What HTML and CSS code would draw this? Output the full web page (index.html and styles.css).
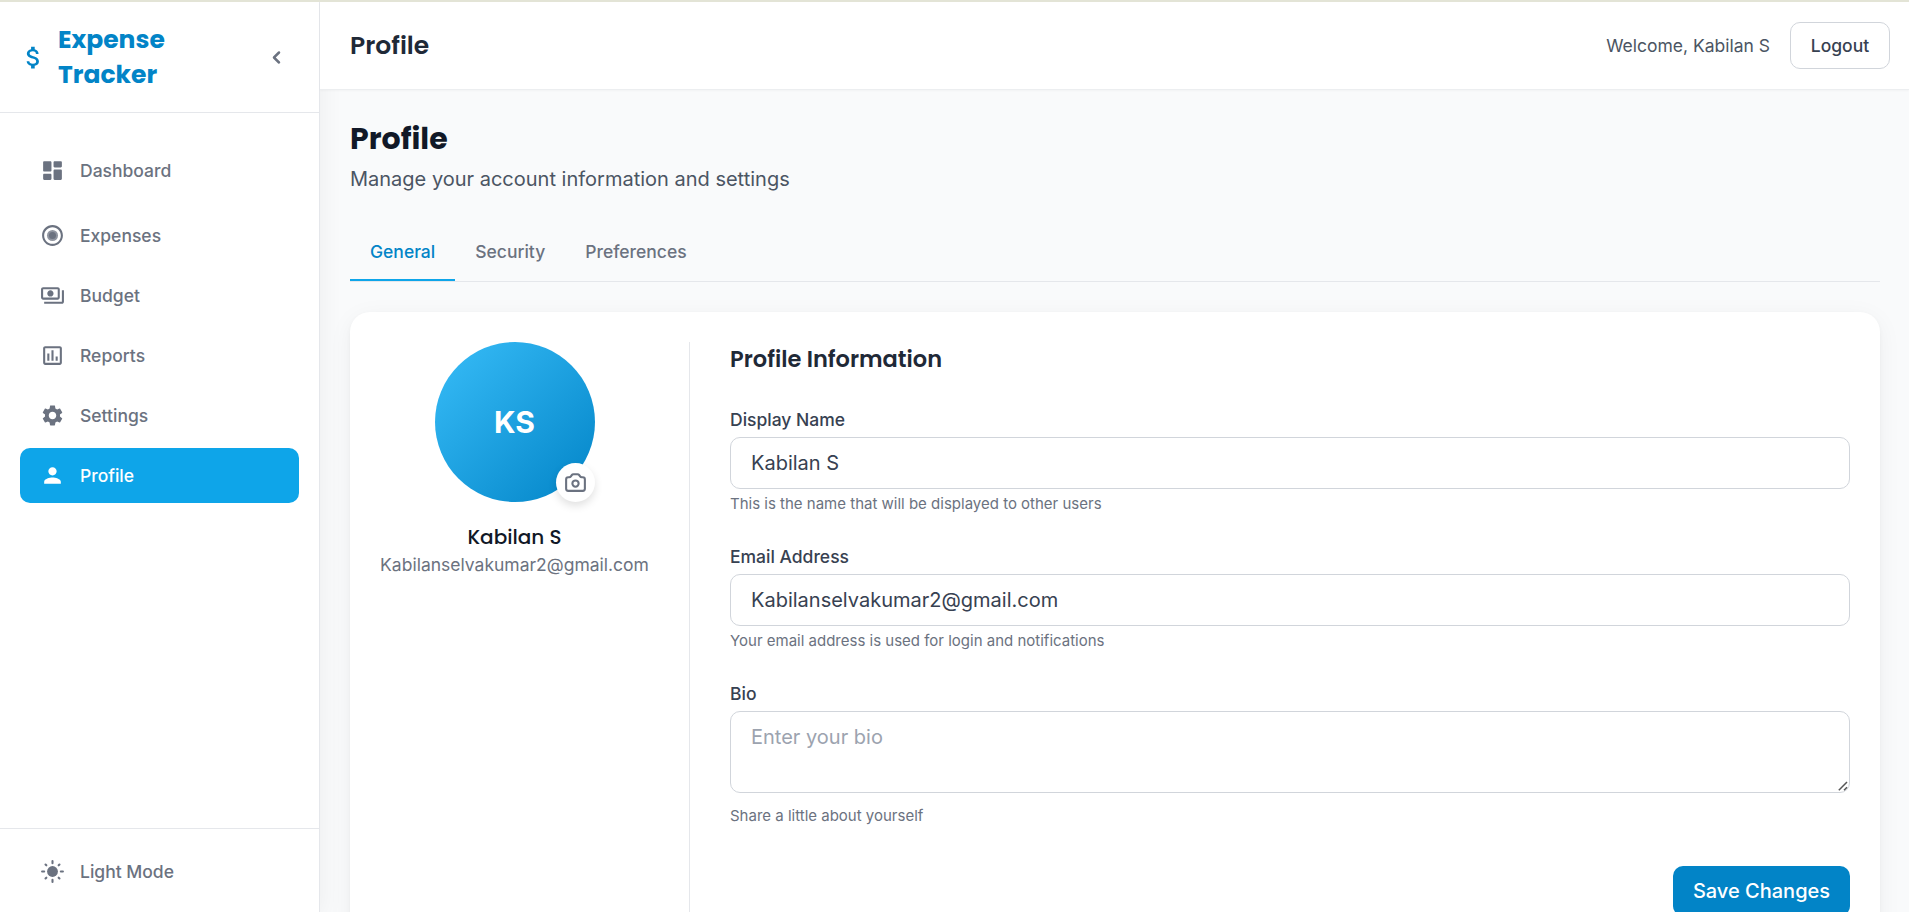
FILE: index.html
```html
<!DOCTYPE html>
<html lang="en">
<head>
<meta charset="utf-8">
<title>Expense Tracker - Profile</title>
<link rel="stylesheet" href="styles.css">
</head>
<body>
<div class="app">
  <aside class="sidebar">
    <div class="brand">
      <svg class="brand-icon" viewBox="0 0 24 24"><path d="M11.8 10.9c-2.27-.59-3-1.2-3-2.15 0-1.09 1.01-1.85 2.7-1.85 1.78 0 2.44.85 2.5 2.1h2.21c-.07-1.72-1.12-3.3-3.21-3.81V3h-3v2.16c-1.94.42-3.5 1.68-3.5 3.61 0 2.31 1.91 3.46 4.7 4.13 2.5.6 3 1.48 3 2.41 0 .69-.49 1.79-2.7 1.79-2.06 0-2.87-.92-2.98-2.1h-2.2c.12 2.19 1.76 3.42 3.68 3.83V21h3v-2.15c1.95-.37 3.5-1.5 3.5-3.55 0-2.84-2.43-3.81-4.7-4.4z"/></svg>
      <div class="brand-name"><span>Expense</span><br><span>Tracker</span></div>
      <button class="collapse" aria-label="Collapse"><svg class="icon" viewBox="0 0 20 20"><path d="M12.707 5.293a1 1 0 010 1.414L9.414 10l3.293 3.293a1 1 0 01-1.414 1.414l-4-4a1 1 0 010-1.414l4-4a1 1 0 011.414 0z"/></svg></button>
    </div>
    <nav class="nav">
      <a class="nav-item first"><svg class="icon" viewBox="0 0 24 24"><path d="M4 13h6c.55 0 1-.45 1-1V4c0-.55-.45-1-1-1H4c-.55 0-1 .45-1 1v8c0 .55.45 1 1 1zm0 8h6c.55 0 1-.45 1-1v-4c0-.55-.45-1-1-1H4c-.55 0-1 .45-1 1v4c0 .55.45 1 1 1zm10 0h6c.55 0 1-.45 1-1v-8c0-.55-.45-1-1-1h-6c-.55 0-1 .45-1 1v8c0 .55.45 1 1 1zM13 4v4c0 .55.45 1 1 1h6c.55 0 1-.45 1-1V4c0-.55-.45-1-1-1h-6c-.55 0-1 .45-1 1z"/></svg><span>Dashboard</span></a>
      <a class="nav-item"><svg class="icon" viewBox="0 0 24 24"><path d="M12 2C6.49 2 2 6.49 2 12s4.49 10 10 10 10-4.49 10-10S17.51 2 12 2zm0 18c-4.41 0-8-3.59-8-8s3.59-8 8-8 8 3.59 8 8-3.59 8-8 8z"/><circle cx="12" cy="12" r="5.3" opacity=".75"/><circle cx="12" cy="12" r="3.4"/></svg><span>Expenses</span></a>
      <a class="nav-item"><svg class="icon" viewBox="0 0 24 24"><path d="M19 14V6c0-1.100-.9-2-2-2H3c-1.100 0-2 .9-2 2v8c0 1.100.9 2 2 2h14c1.100 0 2-.9 2-2zm-2 0H3V6h14v8zm-7-7c-1.660 0-3 1.340-3 3s1.340 3 3 3 3-1.340 3-3-1.340-3-3-3zm13 0v11c0 1.100-.9 2-2 2H4v-2h17V7h2z"/></svg><span>Budget</span></a>
      <a class="nav-item"><svg class="icon" viewBox="0 0 24 24"><path d="M9 17H7v-7h2v7zm4 0h-2V7h2v10zm4 0h-2v-4h2v4zm2 2H5V5h14v14zm0-16H5c-1.100 0-2 .9-2 2v14c0 1.100.9 2 2 2h14c1.100 0 2-.9 2-2V5c0-1.100-.9-2-2-2z"/></svg><span>Reports</span></a>
      <a class="nav-item"><svg class="icon" viewBox="0 0 24 24"><path d="M19.140 12.940c.040-.3.060-.610.060-.940 0-.320-.020-.640-.070-.940l2.030-1.580c.180-.140.230-.410.120-.610l-1.920-3.320c-.120-.220-.370-.290-.590-.220l-2.390.960c-.5-.380-1.030-.7-1.620-.940l-.360-2.540c-.040-.240-.240-.410-.480-.410h-3.840c-.240 0-.430.170-.470.410l-.360 2.540c-.590.240-1.130.570-1.620.940l-2.390-.960c-.220-.080-.470 0-.590.220L2.740 8.870c-.120.210-.080.470.120.610l2.030 1.580c-.050.3-.090.630-.090.940s.020.640.070.940l-2.030 1.580c-.180.140-.230.410-.120.610l1.920 3.320c.120.220.370.290.590.220l2.390-.960c.5.380 1.030.7 1.620.940l.360 2.540c.050.240.240.410.480.410h3.840c.240 0 .440-.170.470-.410l.360-2.540c.590-.240 1.130-.560 1.620-.940l2.390.960c.220.080.470 0 .590-.220l1.920-3.320c.120-.220.070-.470-.120-.610l-2.010-1.580zM12 15.600c-1.980 0-3.600-1.620-3.600-3.600s1.620-3.600 3.600-3.600 3.600 1.620 3.600 3.600-1.620 3.600-3.600 3.600z"/></svg><span>Settings</span></a>
      <a class="nav-item active"><svg class="icon" viewBox="0 0 24 24"><path d="M12 12c2.210 0 4-1.790 4-4s-1.790-4-4-4-4 1.790-4 4 1.790 4 4 4zm0 2c-2.670 0-8 1.340-8 4v2h16v-2c0-2.660-5.330-4-8-4z"/></svg><span>Profile</span></a>
    </nav>
    <div class="sidebar-foot">
      <a class="nav-item"><svg class="icon" viewBox="0 0 24 24"><circle cx="12" cy="12" r="5.2"/><path fill="none" stroke="currentColor" stroke-width="2" stroke-linecap="round" d="M12 2v2M12 20v2M2 12h2M20 12h2M5.300 5.300l.8.8M17.900 17.900l.8.8M18.700 5.300l-.8.8M6.100 17.900l-.8.8"/></svg><span>Light Mode</span></a>
    </div>
  </aside>

  <div class="main">
    <header class="topbar">
      <div class="topbar-title">Profile</div>
      <div class="user"><span class="welcome">Welcome, Kabilan S</span><button class="logout">Logout</button></div>
    </header>
    <main class="content">
      <h1 class="page-title">Profile</h1>
      <p class="subtitle">Manage your account information and settings</p>
      <div class="tabs"><a class="tab selected">General</a><a class="tab">Security</a><a class="tab">Preferences</a></div>
      <section class="card">
        <div class="person">
          <div class="avatar">KS
            <button class="camera" aria-label="Change photo"><svg class="icon outline" viewBox="0 0 24 24"><path d="M3 9a2 2 0 012-2h.93a2 2 0 001.664-.89l.812-1.220A2 2 0 0110.070 4h3.860a2 2 0 011.664.89l.812 1.220A2 2 0 0018.070 7H19a2 2 0 012 2v9a2 2 0 01-2 2H5a2 2 0 01-2-2V9z"/><path d="M15 13a3 3 0 11-6 0 3 3 0 016 0z"/></svg></button>
          </div>
          <div class="person-name">Kabilan S</div>
          <div class="person-email">Kabilanselvakumar2@gmail.com</div>
        </div>
        <form class="form">
          <h2 class="form-title">Profile Information</h2>
          <div class="field"><label class="label" for="name">Display Name</label><input class="input" id="name" value="Kabilan S"><p class="help">This is the name that will be displayed to other users</p></div>
          <div class="field"><label class="label" for="email">Email Address</label><input class="input" id="email" value="Kabilanselvakumar2@gmail.com"><p class="help">Your email address is used for login and notifications</p></div>
          <div class="field last"><label class="label" for="bio">Bio</label>
            <div class="area-wrap"><textarea class="input area" id="bio" rows="2" placeholder="Enter your bio"></textarea><svg class="grip" viewBox="0 0 10 10"><path d="M.8 9.200 9 1M6 9.200 9 6.200"/></svg></div>
            <p class="help area-help">Share a little about yourself</p></div>
          <div class="actions"><button type="button" class="save">Save Changes</button></div>
        </form>
      </section>
    </main>
  </div>
</div>
</body>
</html>
```

FILE: styles.css
```css
* { box-sizing: border-box; margin: 0; padding: 0; }
html, body { height: 100%; overflow: hidden; }
body {
  font-family: Inter, "Liberation Sans", sans-serif;
  font-size: 17.5px;
  line-height: 25px;
  color: #374151;
  background: #f9fafb;
}
button, input, textarea { font: inherit; color: inherit; }
button { border: 0; background: none; }

.app { display: flex; height: 912px; border-top: 2px solid #e3e4d6; overflow: hidden; }
.icon { width: 25px; height: 25px; flex: none; fill: currentColor; display: block; }
.outline { fill: none; stroke: currentColor; stroke-width: 2; stroke-linecap: round; stroke-linejoin: round; }

.brand-name, .topbar-title, .page-title, .person-name, .form-title { font-family: Poppins, Inter, sans-serif; }

.sidebar {
  position: relative;
  z-index: 2;
  width: 320px;
  flex: none;
  display: flex;
  flex-direction: column;
  background: #fff;
  border-right: 1px solid #e5e7eb;
  box-shadow: 0 5px 25px rgba(0, 0, 0, .06);
}
.brand { display: flex; align-items: center; height: 111px; padding: 0 30px 0 18.5px; border-bottom: 1px solid #e5e7eb; color: #0284c7; }
.brand-icon { width: 29px; height: 29px; flex: none; fill: currentColor; }
.brand-name { flex: 1; margin-left: 10.5px; font-size: 25px; font-weight: 700; line-height: 35px; }
.collapse { color: #6b7280; }

.nav { flex: 1; display: flex; flex-direction: column; gap: 5px; padding: 30px 20px; }
.nav-item { display: flex; align-items: center; gap: 15px; height: 55px; padding: 0 20px; border-radius: 10px; color: #6b7280; font-weight: 500; }
.nav-item.first { margin-bottom: 5px; }
.nav-item.active { background: #0ea5e9; color: #fff; }
.sidebar-foot { height: 84px; padding: 15px 20px 0; border-top: 1px solid #e5e7eb; }

.main { flex: 1; min-width: 0; }
.topbar { position: relative; z-index: 3; display: flex; justify-content: space-between; align-items: center; height: 88px; padding: 0 19px 0 30px; background: #fff; border-bottom: 1px solid #eceef0; box-shadow: 0 1px 2px rgba(0, 0, 0, .03); }
.topbar-title { font-size: 25px; font-weight: 600; line-height: 35px; color: #1f2937; }
.user { display: flex; align-items: center; gap: 20px; }
.welcome { color: #4b5563; }
.logout { width: 100px; height: 47px; border: 1px solid #d1d5db; border-radius: 10px; font-weight: 500; color: #374151; }

.content { padding: 30px 29px 0 30px; }
.page-title { font-size: 30px; font-weight: 700; line-height: 38px; color: #111827; }
.subtitle { margin-top: 6px; font-size: 20px; line-height: 30px; color: #4b5563; }
.tabs { display: flex; height: 60px; margin-top: 28px; border-bottom: 1px solid #e5e7eb; }
.tab { display: flex; align-items: center; height: 59px; padding: 2px 20px 0; border-bottom: 2px solid transparent; font-weight: 500; color: #6b7280; }
.tab.selected { color: #0284c7; border-bottom-color: #0ea5e9; }

.card { display: flex; height: 700px; margin-top: 30px; padding: 30px; border-radius: 20px; background: #fff; box-shadow: 0 5px 25px rgba(0, 0, 0, .05), 0 2px 4px rgba(0, 0, 0, .04); }
.person { width: 310px; flex: none; padding-right: 40px; display: flex; flex-direction: column; align-items: center; border-right: 1px solid #e5e7eb; }
.avatar { position: relative; width: 160px; height: 160px; border-radius: 50%; display: flex; align-items: center; justify-content: center; font-size: 30px; font-weight: 700; color: #fff; background: linear-gradient(135deg, #38bdf8, #0284c7); }
.camera { position: absolute; right: 0; bottom: 0; width: 39px; height: 39px; border-radius: 50%; display: flex; align-items: center; justify-content: center; background: #fff; color: #6b7280; box-shadow: 0 4px 8px rgba(0, 0, 0, .12); }
.person-name { margin-top: 20px; font-size: 20px; font-weight: 500; line-height: 30px; color: #111827; }
.person-email { color: #6b7280; }

.form { flex: 1; padding-left: 40px; }
.form-title { font-size: 22.5px; font-weight: 600; line-height: 35px; color: #1f2937; }
.field { display: flex; flex-direction: column; height: 137px; }
.field.last { height: 150px; }
.form-title + .field { margin-top: 30px; }
.label { height: 30px; flex: none; font-weight: 500; }
.input { width: 100%; height: 52px; padding: 10px 20px; border: 1px solid #d1d5db; border-radius: 10px; font-size: 20px; line-height: 30px; background: #fff; outline: none; }
.area-wrap { position: relative; height: 82px; flex: none; }
.area { display: block; height: 82px; resize: none; overflow: hidden; }
.area::placeholder { color: #9ca3af; }
.grip { position: absolute; right: 2px; bottom: 2px; width: 10px; height: 10px; fill: none; stroke: #555; stroke-width: 1.5; }
.help { margin-top: 5px; font-size: 15px; line-height: 20px; color: #6b7280; }
.area-help { margin-top: 13px; }
.actions { display: flex; justify-content: flex-end; margin-top: 35px; }
.save { width: 177px; height: 50px; border-radius: 10px; background: #0284c7; color: #fff; font-size: 20px; font-weight: 500; }
```
